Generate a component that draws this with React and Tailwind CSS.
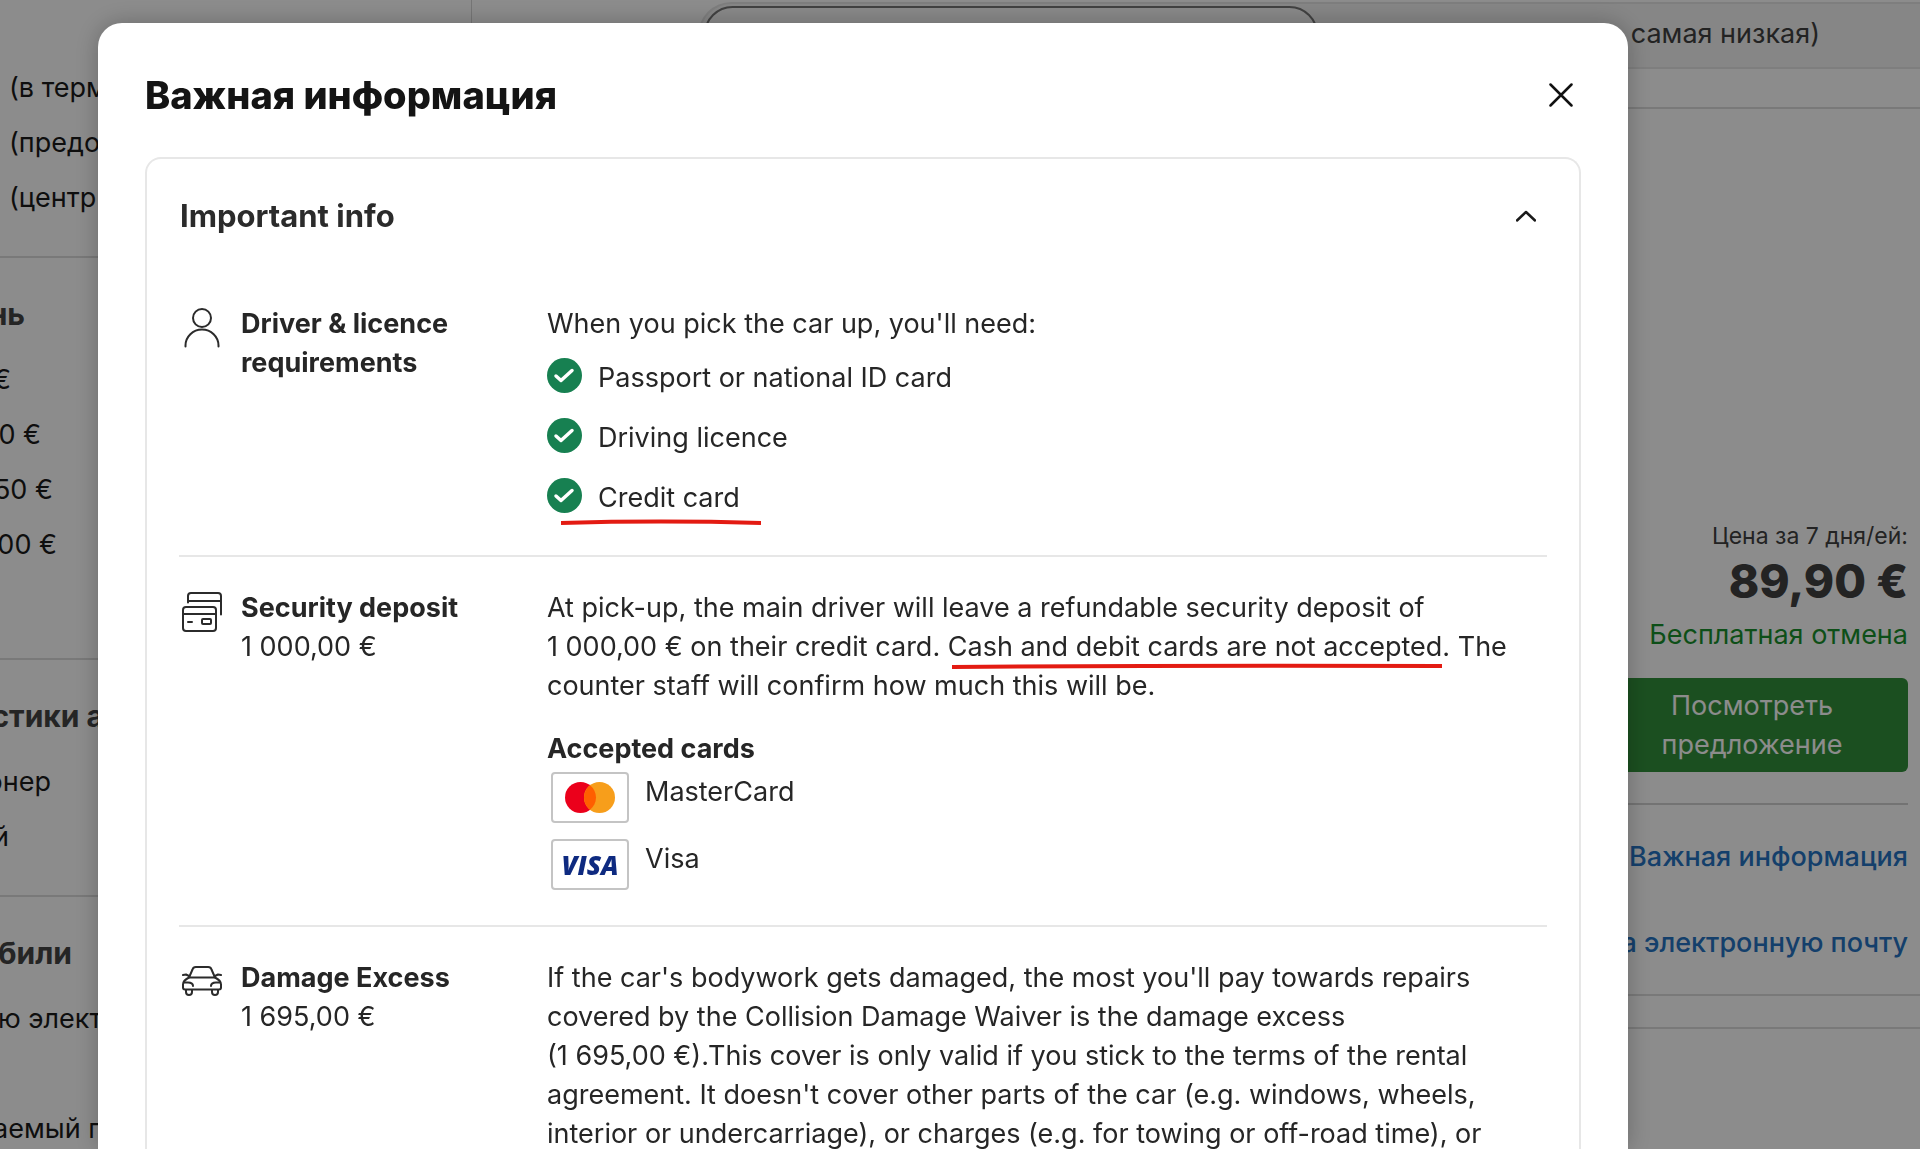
import { useState } from "react";

const CHECKLIST = ["Passport or national ID card", "Driving licence", "Credit card"];

const FILTERS = [
  {
    title: null,
    items: [
      { text: "(в терм", width: "pl-[9px]" },
      { text: "(предо", width: "pl-[9px]" },
      { text: "(центр", width: "pl-[9px]" },
    ],
    pad: "pt-[61px] pb-[30px]",
  },
  {
    title: { text: "нь", width: "w-[25px]" },
    items: [
      { text: "€", width: "w-[11px]" },
      { text: "0 €", width: "w-[41px]" },
      { text: "50 €", width: "w-[53px]" },
      { text: "00 €", width: "w-[57px]" },
    ],
    pad: "pt-9 pb-[85px]",
  },
  {
    title: { text: "стики а", width: "w-[104px]" },
    items: [
      { text: "онер", width: "w-[51px]" },
      { text: "й", width: "w-[9px]" },
    ],
    pad: "pt-9 pb-[30px]",
  },
  {
    title: { text: "били", width: "w-[72px]" },
    items: [
      { text: "ю элект", width: "w-[102px]" },
      { text: "", width: "w-full" },
      { text: "аемый г", width: "w-[100px]" },
    ],
    pad: "pt-9",
  },
];

function PersonIcon() {
  return (
    <svg viewBox="0 0 40 40" className="size-10" fill="none" stroke="currentColor" strokeWidth="2" strokeLinecap="round" aria-hidden="true">
      <circle cx="20" cy="10" r="9" />
      <path d="M3.500 38.500v-1a16.500 16 0 0 1 33 0v1" />
    </svg>
  );
}

function CardsIcon() {
  return (
    <svg viewBox="0 0 40 40" className="size-10" fill="none" stroke="currentColor" strokeWidth="2" strokeLinecap="round" strokeLinejoin="round" aria-hidden="true">
      <path d="M6 10.500V4a3 3 0 0 1 3-3h27a3 3 0 0 1 3 3v18.500M6 9h33" />
      <rect x="1" y="15" width="33" height="24" rx="3" />
      <path d="M1 22h33M6 30h4" />
      <rect x="20" y="27" width="9" height="5" rx="1" />
    </svg>
  );
}

function CarIcon() {
  return (
    <svg viewBox="0 0 40 40" className="size-10" fill="none" stroke="currentColor" strokeWidth="2" strokeLinecap="round" strokeLinejoin="round" aria-hidden="true">
      <path d="M7 15.500 10.500 7.500A3.500 3.500 0 0 1 14 5h12a3.500 3.500 0 0 1 3.500 2.500L33 15.500z" />
      <path d="M7 15.500c-4 2-6 4-6 7v3a2 2 0 0 0 2 2h34a2 2 0 0 0 2-2v-3c0-3-2-5-6-7" />
      <path d="M1 13l3-.5 3 1.500M39 13l-3-.5-3 1.500" />
      <path d="M2 20.500h4c3 0 5 1 5 3.500M38 20.500h-4c-3 0-5 1-5 3.500" />
      <path d="M4 28v2a3 3 0 0 0 6 0v-2M30 28v2a3 3 0 0 0 6 0v-2" />
    </svg>
  );
}

function CheckIcon() {
  return (
    <svg viewBox="0 0 35 35" className="size-[35px] shrink-0" aria-hidden="true">
      <circle cx="17.500" cy="17.500" r="17.500" fill="#178051" />
      <path d="M9 18l5 4.500L25 12.500" fill="none" stroke="#fff" strokeWidth="3.500" strokeLinecap="round" strokeLinejoin="round" />
    </svg>
  );
}

function MasterCardLogo() {
  return (
    <svg viewBox="0 0 50 31" className="w-[50px] h-[31px]" aria-hidden="true">
      <circle cx="15.500" cy="15.500" r="15.500" fill="#eb001b" />
      <circle cx="34.500" cy="15.500" r="15.500" fill="#f79e1b" />
      <path d="M25 3.250a15.500 15.500 0 0 1 0 24.500a15.500 15.500 0 0 1 0-24.500z" fill="#ff5f00" />
    </svg>
  );
}

function Marker({ d, viewBox, className }) {
  return (
    <svg viewBox={viewBox} preserveAspectRatio="none" className={className} fill="none" stroke="#e31b12" strokeWidth="4" aria-hidden="true">
      <path d={d} />
    </svg>
  );
}

function InfoRow({ icon, title, amount, last, children }) {
  return (
    <section className={`flex pl-[3px] ${last ? "" : "border-b-2 border-[#e7e7e7]"}`}>
      <div className="w-[59px] shrink-0 pt-1 text-[#2b2b2b]">{icon}</div>
      <div className="w-[306px] shrink-0 pr-16">
        <h3 className="font-bold text-[#262626]">{title}</h3>
        {amount && <p>{amount}</p>}
      </div>
      <div className="min-w-0 flex-1">{children}</div>
    </section>
  );
}

function Filters() {
  return (
    <aside className="w-[472px] shrink-0 border-r border-[#d6d6d6] text-[27px] text-[#1a1a1a]">
      {FILTERS.map((group, idx) => (
        <div key={idx} className={`border-b-2 border-[#dcdcdc] last:border-b-0 ${group.pad}`}>
          {group.title && (
            <h3 className={`mb-[19px] flex h-10 items-center justify-end whitespace-nowrap text-[30px] font-bold text-[#444444] ${group.title.width}`}>
              {group.title.text}
            </h3>
          )}
          <ul>
            {group.items.map((item, i) => (
              <li key={i} className={`flex h-[55px] items-center whitespace-nowrap ${idx === 0 ? "" : "justify-end"} ${item.width}`}>
                {item.text}
              </li>
            ))}
          </ul>
        </div>
      ))}
    </aside>
  );
}

function Results() {
  return (
    <main className="flex min-w-0 flex-1 flex-col">
      <div className="pl-[226px] pt-[2px]">
        <div className="flex h-[67px] rounded-l-full border-2 border-r-0 border-[#e6e6e6] bg-[#f4f4f4] p-1 pt-[2px]">
          <div className="w-[614px] shrink-0 rounded-full border-2 border-[#777777] bg-[#fafafa]" />
          <p className="ml-auto flex items-center pr-[96px] text-[27px] text-[#404040]">самая низкая)</p>
        </div>
      </div>
      <div className="mt-[38px] flex h-[889px] flex-col items-end border-y-2 border-[#dcdcdc] pr-3 pt-[410px] text-right">
        <p className="text-[23px] leading-[34px] text-[#404040]">Цена за 7 дня/ей:</p>
        <p className="text-[46px] font-extrabold leading-[57px] text-[#404040]">89,90 €</p>
        <p className="text-[27px] leading-[50px] text-[#19912c]">Бесплатная отмена</p>
        <button type="button" className="mt-[18px] w-[312px] rounded-md bg-[#32913b] px-10 py-2 text-center text-[27px] leading-[39px] text-white">
          Посмотреть предложение
        </button>
        <div className="mt-[31px] flex w-full flex-col items-end border-t-2 border-[#d2d2d2] pt-8 text-[27px] font-medium leading-[39px] text-[#2674c4]">
          <a href="#info">Важная информация</a>
          <a href="#email" className="mt-[47px]">а электронную почту</a>
        </div>
      </div>
      <div className="mt-[31px] flex-1 border-t-2 border-[#dcdcdc]" />
    </main>
  );
}

function ImportantInfo() {
  const [open, setOpen] = useState(true);

  return (
    <div className="rounded-t-2xl border-2 border-b-0 border-[#e7e7e7] px-8 pt-[34px]">
      <button type="button" aria-expanded={open} onClick={() => setOpen(!open)} className="flex w-full items-center justify-between pl-[1px] pr-[11px]">
        <span className="text-[31px] font-bold leading-[46px] text-[#2b2b2b]">Important info</span>
        <svg viewBox="0 0 20 12" className="h-3 w-5" fill="none" stroke="#1a1a1a" strokeWidth="2.500" strokeLinecap="round" strokeLinejoin="round" aria-hidden="true">
          <path d="M1 10.500l9-8.500 9 8.500" />
        </svg>
      </button>

      {open && (
        <div className="pt-[65px] text-[27px] leading-[39px] text-[#262626]">
          <InfoRow icon={<PersonIcon />} title="Driver &amp; licence requirements">
            <p>When you pick the car up, you'll need:</p>
            <ul className="flex flex-col gap-[21px] pb-[38px] pt-[15px]">
              {CHECKLIST.map((item) => (
                <li key={item} className="relative flex items-start gap-4">
                  <CheckIcon />
                  <span>{item}</span>
                  {item === "Credit card" && (
                    <Marker viewBox="0 0 200 6" d="M0 4Q100 1 200 4" className="absolute left-[14px] top-[41px] h-[6px] w-[200px]" />
                  )}
                </li>
              ))}
            </ul>
          </InfoRow>

          <div className="pt-[31px]">
            <InfoRow icon={<CardsIcon />} title="Security deposit" amount="1 000,00 €">
              <p>
                At pick-up, the main driver will leave a refundable security deposit of 1&nbsp;000,00&nbsp;€ on their credit card.{" "}
                <span className="relative inline-block">
                  Cash and debit cards are not accepted.
                  <Marker viewBox="0 0 490 6" d="M0 4Q245 2 490 3" className="absolute left-1 top-[36px] h-[6px] w-[490px]" />
                </span>{" "}
                The counter staff will confirm how much this will be.
              </p>
              <h4 className="mt-6 font-bold">Accepted cards</h4>
              <ul className="flex flex-col gap-4 pb-[35px] pl-1 pt-1">
                <li className="flex gap-4">
                  <span className="flex h-[51px] w-[78px] items-center justify-center rounded-sm border-2 border-[#c4c4c4]">
                    <MasterCardLogo />
                  </span>
                  MasterCard
                </li>
                <li className="flex gap-4">
                  <span aria-hidden="true" className="flex h-[51px] w-[78px] items-center justify-center rounded-sm border-2 border-[#c4c4c4] font-['Open_Sans','Noto_Sans',sans-serif] text-[26px] font-extrabold italic leading-none text-[#0e2a80]">
                    VISA
                  </span>
                  Visa
                </li>
              </ul>
            </InfoRow>
          </div>

          <div className="pt-[31px]">
            <InfoRow icon={<CarIcon />} title="Damage Excess" amount="1 695,00 €" last>
              <p>
                If the car's bodywork gets damaged, the most you'll pay towards repairs covered by the Collision Damage Waiver is the damage excess
                (1&nbsp;695,00&nbsp;€).This cover is only valid if you stick to the terms of the rental agreement. It doesn't cover other parts of
                the car (e.g. windows, wheels, interior or undercarriage), or charges (e.g. for towing or off-road time), or
              </p>
            </InfoRow>
          </div>
        </div>
      )}
    </div>
  );
}

function InfoDialog({ onClose }) {
  return (
    <div className="fixed inset-0 flex overflow-hidden bg-black/45 pl-[98px] pr-[292px] pt-[23px]">
      <div role="dialog" aria-modal="true" aria-labelledby="dialog-title" className="min-w-0 flex-1 rounded-t-3xl bg-white px-[47px] pt-[43px] shadow-[0_0_24px_rgba(0,0,0,0.25)]">
        <header className="mb-[33px] flex items-center justify-between pr-2">
          <h2 id="dialog-title" className="text-[38px] font-extrabold leading-[58px] text-[#141414]">
            Важная информация
          </h2>
          <button type="button" aria-label="Закрыть" onClick={onClose}>
            <svg viewBox="0 0 24 24" className="size-6" fill="none" stroke="#111" strokeWidth="2.500" strokeLinecap="round" aria-hidden="true">
              <path d="M1.500 1.500l21 21M22.500 1.500l-21 21" />
            </svg>
          </button>
        </header>
        <ImportantInfo />
      </div>
    </div>
  );
}

export default function App() {
  const [open, setOpen] = useState(true);

  return (
    <div className="flex h-screen overflow-hidden bg-white font-['Inter','Liberation_Sans',sans-serif]">
      <Filters />
      <Results />
      {open && <InfoDialog onClose={() => setOpen(false)} />}
    </div>
  );
}
